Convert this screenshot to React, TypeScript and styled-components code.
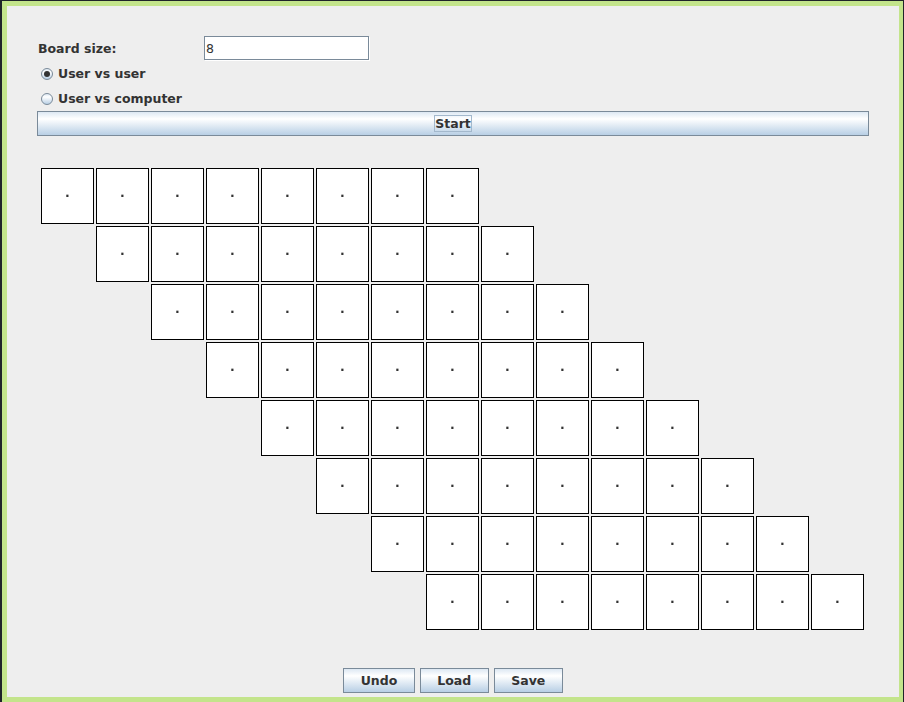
import React from "react";
import styled, { createGlobalStyle } from "styled-components";

const GlobalStyle = createGlobalStyle`
  html, body {
    margin: 0;
    padding: 0;
    background: #1f2329;
    overflow: hidden;
  }
  * { box-sizing: border-box; }
`;

const FONT = `"DejaVu Sans", Verdana, sans-serif`;

const Desktop = styled.div`
  width: 904px;
  height: 702px;
  padding: 1px 1px 0 2px;
  background: #1f2329;
`;

const Frame = styled.div`
  width: 901px;
  height: 701px;
  border-style: solid;
  border-color: #c3e48b;
  border-width: 5px 4px 5px 5px;
  background: #eeeeee;
  display: flex;
  flex-direction: column;
  padding: 30px 30px 0 30px;
  font-family: ${FONT};
  font-size: 12.5px;
  color: #333333;
`;

const FormRow = styled.div`
  display: flex;
  align-items: center;
  height: 24px;
`;

const Label = styled.span`
  width: 167px;
  padding-left: 1px;
  font-weight: bold;
`;

const TextField = styled.div`
  width: 165px;
  height: 24px;
  border: 1px solid #7a8a99;
  box-shadow: 1px 1px 0 #ffffff;
  background: #ffffff;
  display: flex;
  align-items: center;
  padding-left: 1px;
  font-weight: normal;
`;

const RadioGroup = styled.div`
  display: flex;
  flex-direction: column;
  margin-top: 1px;
`;

const RadioRow = styled.label`
  display: flex;
  align-items: center;
  height: 25px;
  padding-left: 4px;
  font-weight: bold;
`;

const RadioCircle = styled.span<{ $checked?: boolean }>`
  width: 12px;
  height: 12px;
  border-radius: 50%;
  border: 1px solid #7a8a99;
  background: linear-gradient(#dde8f3 0%, #ffffff 30%, #b8cfe5 100%);
  margin-right: 5px;
  display: flex;
  align-items: center;
  justify-content: center;
  &::after {
    content: "";
    display: ${(p) => (p.$checked ? "block" : "none")};
    width: 6px;
    height: 6px;
    border-radius: 50%;
    background: #333333;
  }
`;

const WideButton = styled.div`
  height: 25px;
  border: 1px solid #7a8a99;
  background: linear-gradient(#dde8f3 0%, #ffffff 30%, #b8cfe5 100%);
  display: flex;
  align-items: center;
  justify-content: center;
  font-weight: bold;
`;

const FocusText = styled.span`
  border: 1px solid #a3b8cc;
  line-height: 15px;
  padding: 0;
`;

const Board = styled.div`
  margin-top: 32px;
  display: flex;
  flex-direction: column;
  gap: 2px;
`;

const BoardRow = styled.div<{ $offset: number }>`
  display: flex;
  gap: 2px;
  padding-left: ${(p) => 4 + p.$offset * 55}px;
`;

const Cell = styled.div`
  width: 53px;
  height: 56px;
  border: 1px solid #000000;
  background: #ffffff;
  display: flex;
  align-items: center;
  justify-content: center;
  color: #333333;
`;

const Dot = styled.span`
  line-height: 1;
  font-weight: bold;
  margin-bottom: 5px;
  margin-right: 1px;
  will-change: transform;
`;

const Footer = styled.div`
  margin-top: auto;
  display: flex;
  justify-content: center;
  gap: 5px;
  padding-bottom: 4px;
`;

const SmallButton = styled.div`
  height: 25px;
  padding: 0 16.5px;
  border: 1px solid #7a8a99;
  background: linear-gradient(#dde8f3 0%, #ffffff 30%, #b8cfe5 100%);
  display: flex;
  align-items: center;
  justify-content: center;
  font-weight: bold;
`;

const rows = Array.from({ length: 8 }, (_, i) => i);
const cols = Array.from({ length: 8 }, (_, i) => i);

export default function App() {
  return (
    <>
      <GlobalStyle />
      <Desktop>
        <Frame>
          <FormRow>
            <Label>Board size:</Label>
            <TextField>8</TextField>
          </FormRow>
          <RadioGroup>
            <RadioRow>
              <RadioCircle $checked />
              User vs user
            </RadioRow>
            <RadioRow>
              <RadioCircle />
              User vs computer
            </RadioRow>
          </RadioGroup>
          <WideButton>
            <FocusText>Start</FocusText>
          </WideButton>
          <Board>
            {rows.map((r) => (
              <BoardRow key={r} $offset={r}>
                {cols.map((c) => (
                  <Cell key={c}>
                    <Dot>.</Dot>
                  </Cell>
                ))}
              </BoardRow>
            ))}
          </Board>
          <Footer>
            <SmallButton>Undo</SmallButton>
            <SmallButton>Load</SmallButton>
            <SmallButton>Save</SmallButton>
          </Footer>
        </Frame>
      </Desktop>
    </>
  );
}
